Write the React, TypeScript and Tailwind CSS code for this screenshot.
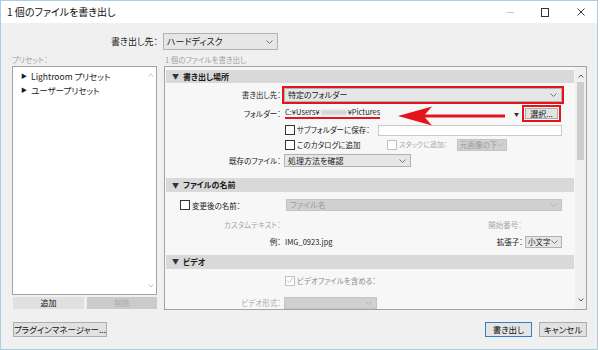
import React from "react"

const jp = "font-['Noto_Sans_CJK_JP','Noto_Sans',sans-serif] [font-feature-settings:'palt'] whitespace-nowrap"

function Chevron({ color = "#6b6b6b" }: { color?: string }) {
  return (
    <svg width="7" height="4" viewBox="0 0 7 4" className="shrink-0">
      <path d="M0.5 0.5 L3.5 3.5 L6.5 0.5" fill="none" stroke={color} strokeWidth="0.9" />
    </svg>
  )
}

function Combo({
  text,
  width,
  height = "h-[13px]",
  disabled,
  textSize = "text-[8px]",
  pad = "pl-[3px] pr-[4px]",
}: {
  text: string
  width: string
  height?: string
  disabled?: boolean
  textSize?: string
  pad?: string
}) {
  return (
    <div
      className={`${width} ${height} ${pad} flex items-center justify-between overflow-hidden border ${
        disabled
          ? "border-[#c4c4c4] bg-[#d0d0d0] text-[#9a9a9a]"
          : "border-[#b2b2b2] bg-[#e6e6e6] text-[#1a1a1a]"
      }`}
    >
      <span className={`${textSize} leading-none`}>{text}</span>
      <Chevron color={disabled ? "#b0b0b0" : "#6b6b6b"} />
    </div>
  )
}

function Check({ disabled, checked }: { disabled?: boolean; checked?: boolean }) {
  return (
    <div
      className={`flex h-[10px] w-[10px] shrink-0 items-center justify-center border bg-white ${
        disabled ? "border-[#c2c2c2]" : "border-[#333333]"
      }`}
    >
      {checked && (
        <svg width="8" height="7" viewBox="0 0 8 7">
          <path d="M1 3.5 L3 5.5 L7 1" fill="none" stroke="#c0c0c0" strokeWidth="1" />
        </svg>
      )}
    </div>
  )
}

function Section({ title }: { title: string }) {
  return (
    <div className="flex h-[14px] items-center bg-[#d9d9d9] pl-[6px]">
      <span className="text-[7px] leading-none text-[#333]">▼</span>
      <span className="ml-[4px] text-[8px] font-bold leading-none text-[#1a1a1a]">{title}</span>
    </div>
  )
}

function Label({ children, gray }: { children: React.ReactNode; gray?: boolean }) {
  return (
    <div
      className={`w-[115px] shrink-0 text-right text-[7.5px] leading-none ${
        gray ? "text-[#a8a8a8]" : "text-[#1a1a1a]"
      }`}
    >
      {children}
    </div>
  )
}

function Button({
  children,
  width,
  primary,
}: {
  children: React.ReactNode
  width: string
  primary?: boolean
}) {
  return (
    <div
      className={`${width} flex h-[15px] items-center justify-center border text-[8.5px] leading-none ${
        primary ? "border-[#2f7fd0] bg-[#e5e5e5] text-[#111]" : "border-[#adadad] bg-[#e1e1e1] text-[#111]"
      }`}
    >
      {children}
    </div>
  )
}

export default function App() {
  return (
    <div className={`h-[350px] w-[600px] bg-white ${jp}`}>
      <div className="flex h-[350px] w-[598px] flex-col border border-[#a6cfe1] bg-[#f0f0f0]">
        {/* title bar */}
        <div className="flex h-[22px] shrink-0 items-center bg-white">
          <span className="pl-[6px] text-[10px] leading-none text-[#111]">1 個のファイルを書き出し</span>
          <div className="ml-auto flex items-center">
            <div className="h-[1px] w-[7px] bg-[#c4c4c4]" />
            <div className="ml-[27px] h-[9px] w-[8px] border border-[#333]" />
            <svg width="8" height="8" viewBox="0 0 8 8" className="ml-[28px] mr-[12px]">
              <path d="M0.5 0.5 L7.5 7.5 M7.5 0.5 L0.5 7.5" stroke="#333" strokeWidth="1" />
            </svg>
          </div>
        </div>

        <div className="flex flex-1 flex-col pl-[11px] pr-[10px]">
          {/* destination */}
          <div className="mt-[10px] flex h-[17px] items-center">
            <div className="w-[146px] text-right text-[9px] leading-none text-[#1a1a1a]">書き出し先：</div>
            <div className="ml-[5px]">
              <Combo text="ハードディスク" width="w-[115px]" height="h-[17px]" textSize="text-[9px]" />
            </div>
          </div>

          {/* column captions */}
          <div className="mt-[3px] flex h-[13px] items-center text-[7.5px] leading-none text-[#a0a0a0]">
            <div className="w-[153px]">プリセット：</div>
            <div>1 個のファイルを書き出し</div>
          </div>

          <div className="flex gap-[7px]">
            {/* presets column */}
            <div className="flex w-[145px] flex-col">
              <div className="flex h-[229px] border border-[#a3a3a3] bg-white">
                <div className="flex flex-1 flex-col gap-[5px] pl-[8px] pt-[5px] text-[8.5px] leading-none text-[#1a1a1a]">
                  <div className="flex items-center">
                    <span className="text-[6px]">▶</span>
                    <span className="ml-[4px]">Lightroom プリセット</span>
                  </div>
                  <div className="flex items-center">
                    <span className="text-[6px]">▶</span>
                    <span className="ml-[4px]">ユーザープリセット</span>
                  </div>
                </div>
                <div className="flex w-[10px] flex-col items-center justify-between py-[6px]">
                  <svg width="6" height="4" viewBox="0 0 6 4">
                    <path d="M0.5 3.5 L3 1 L5.5 3.5" fill="none" stroke="#b5b5b5" strokeWidth="0.9" />
                  </svg>
                  <svg width="6" height="4" viewBox="0 0 6 4">
                    <path d="M0.5 0.5 L3 3 L5.5 0.5" fill="none" stroke="#b5b5b5" strokeWidth="0.9" />
                  </svg>
                </div>
              </div>
              <div className="ml-[1px] mt-[2px] flex gap-[3px]">
                <div className="flex h-[12px] w-[71px] items-center justify-center bg-[#e0e0e0] text-[8px] leading-none text-[#111]">
                  追加
                </div>
                <div className="flex h-[12px] w-[70px] items-center justify-center bg-[#cbcbcb] text-[7.5px] leading-none text-[#a8a8a8]">
                  削除
                </div>
              </div>
            </div>

            {/* settings panel */}
            <div className="flex h-[244px] w-[423px] border border-[#a3a3a3] bg-[#f7f7f7]">
              <div className="flex h-full flex-1 flex-col overflow-hidden px-[1px] pt-[3px]">
                <Section title="書き出し場所" />

                <div className="mt-[3px] flex h-[18px] items-center">
                  <Label>書き出し先：</Label>
                  <div className="ml-[1px] border-2 border-[#e3141c]">
                    <Combo text="特定のフォルダー" width="w-[278px]" height="h-[14px]" />
                  </div>
                </div>

                <div className="relative mt-[1px] flex h-[17px] items-center">
                  <Label>フォルダー：</Label>
                  <div className="ml-[4px] flex items-center border-b-2 border-[#e3141c] pb-[1px] text-[7.5px] leading-none text-[#1a1a1a]">
                    <span>C:¥Users¥</span>
                    <span className="mx-[1px] h-[5px] w-[26px] bg-[#d3d3d3] blur-[1px]" />
                    <span>¥Pictures</span>
                  </div>
                  <span className="ml-auto text-[5px] leading-none text-[#333]">▼</span>
                  <div className="ml-[3px] mr-[13px] border-2 border-[#e3141c] p-[1px]">
                    <div className="flex h-[11px] w-[33px] items-center justify-center border border-[#adadad] bg-[#e3e3e3] text-[8px] leading-none text-[#111]">
                      選択...
                    </div>
                  </div>
                  <svg width="108" height="20" viewBox="0 0 108 20" className="absolute left-[232px] top-[1px]">
                    <path d="M0 10 L34 0.5 L27 8.5 L107 8.5 L107 11.5 L27 11.5 L34 19.5 Z" fill="#e3141c" />
                  </svg>
                </div>

                <div className="mt-[2px] flex h-[13px] items-center">
                  <div className="w-[119px] shrink-0" />
                  <Check />
                  <span className="ml-[2px] text-[7.5px] leading-none text-[#1a1a1a]">サブフォルダーに保存：</span>
                  <div className="ml-auto mr-[12px] h-[11px] w-[184px] border border-[#c9c9c9] bg-white" />
                </div>

                <div className="mt-[2px] flex h-[14px] items-center">
                  <div className="w-[119px] shrink-0" />
                  <div className="flex w-[102px] items-center">
                    <Check />
                    <span className="ml-[2px] text-[7.5px] leading-none text-[#1a1a1a]">このカタログに追加</span>
                  </div>
                  <div className="flex w-[70px] items-center">
                    <Check disabled />
                    <span className="ml-[2px] text-[7px] leading-none text-[#a8a8a8]">スタックに追加：</span>
                  </div>
                  <Combo
                    text="元画像の下"
                    width="w-[50px]"
                    height="h-[12px]"
                    textSize="text-[7.5px]"
                    pad="pl-[2px] pr-[3px]"
                    disabled
                  />
                </div>

                <div className="mt-[3px] flex h-[13px] items-center">
                  <Label>既存のファイル：</Label>
                  <div className="ml-[3px]">
                    <Combo text="処理方法を確認" width="w-[127px]" />
                  </div>
                </div>

                <div className="mt-[11px]">
                  <Section title="ファイルの名前" />
                </div>

                <div className="mt-[7px] flex h-[12px] items-center">
                  <div className="w-[14px] shrink-0" />
                  <Check />
                  <span className="ml-[2px] text-[7.5px] leading-none text-[#1a1a1a]">変更後の名前：</span>
                  <div className="ml-auto mr-[12px]">
                    <Combo text="ファイル名" width="w-[276px]" height="h-[12px]" disabled />
                  </div>
                </div>

                <div className="mt-[8px] flex h-[11px] items-center">
                  <Label gray>カスタムテキスト：</Label>
                  <div className="w-[241px] text-right text-[7.5px] leading-none text-[#a8a8a8]">開始番号：</div>
                </div>

                <div className="mt-[6px] flex h-[12px] items-center">
                  <Label>例：</Label>
                  <span className="ml-[4px] text-[7.5px] leading-none text-[#1a1a1a]">IMG_0923.jpg</span>
                  <span className="ml-auto text-[7.5px] leading-none text-[#1a1a1a]">拡張子：</span>
                  <div className="ml-[2px] mr-[12px]">
                    <Combo
                      text="小文字"
                      width="w-[37px]"
                      height="h-[12px]"
                      textSize="text-[7.5px]"
                      pad="pl-[2px] pr-[3px]"
                    />
                  </div>
                </div>

                <div className="mt-[7px]">
                  <Section title="ビデオ" />
                </div>

                <div className="mt-[7px] flex h-[11px] items-center">
                  <div className="w-[119px] shrink-0" />
                  <Check disabled checked />
                  <span className="ml-[2px] text-[7.5px] leading-none text-[#8c8c8c]">ビデオファイルを含める：</span>
                </div>

                <div className="mt-[11px] flex h-[12px] shrink-0 items-center">
                  <Label gray>ビデオ形式：</Label>
                  <div className="ml-[3px]">
                    <Combo text="" width="w-[93px]" height="h-[12px]" disabled />
                  </div>
                </div>
              </div>

              {/* scrollbar */}
              <div className="flex w-[11px] flex-col items-center bg-[#f0f0f0] py-[7px]">
                <svg width="6" height="4" viewBox="0 0 6 4">
                  <path d="M0.5 3.5 L3 1 L5.5 3.5" fill="none" stroke="#555" strokeWidth="1" />
                </svg>
                <div className="mt-[4px] h-[78px] w-[7px] bg-[#cdcdcd]" />
                <svg width="6" height="4" viewBox="0 0 6 4" className="mt-auto">
                  <path d="M0.5 0.5 L3 3 L5.5 0.5" fill="none" stroke="#555" strokeWidth="1" />
                </svg>
              </div>
            </div>
          </div>

          {/* footer */}
          <div className="mt-[12px] flex items-center">
            <div className="ml-[1px]">
              <Button width="w-[94px]">プラグインマネージャー...</Button>
            </div>
            <div className="ml-auto flex gap-[7px]">
              <Button width="w-[47px]" primary>書き出し</Button>
              <Button width="w-[48px]">キャンセル</Button>
            </div>
          </div>
        </div>
      </div>
    </div>
  )
}
